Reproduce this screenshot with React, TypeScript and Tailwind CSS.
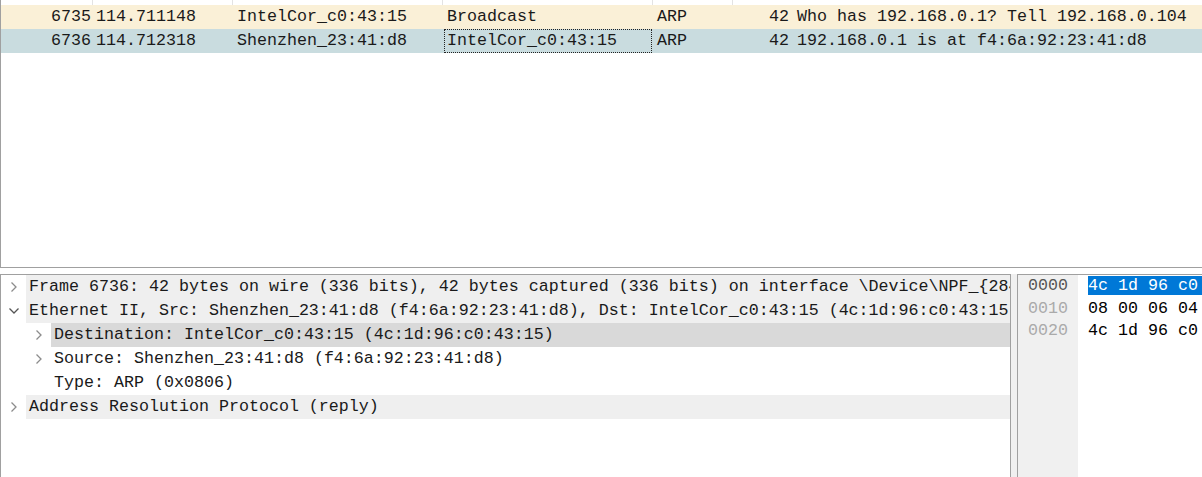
import type { ReactNode } from "react";

const mono = { fontFamily: '"Liberation Mono", "DejaVu Sans Mono", monospace' };

type Packet = {
  no: string;
  time: string;
  src: string;
  dst: string;
  proto: string;
  len: string;
  info: string;
  bg: string;
  focused?: boolean;
};

const packets: Packet[] = [
  {
    no: "6735",
    time: "114.711148",
    src: "IntelCor_c0:43:15",
    dst: "Broadcast",
    proto: "ARP",
    len: "42",
    info: "Who has 192.168.0.1? Tell 192.168.0.104",
    bg: "bg-[#faf0d7]",
  },
  {
    no: "6736",
    time: "114.712318",
    src: "Shenzhen_23:41:d8",
    dst: "IntelCor_c0:43:15",
    proto: "ARP",
    len: "42",
    info: "192.168.0.1 is at f4:6a:92:23:41:d8",
    bg: "bg-[#c9dcdf]",
    focused: true,
  },
];

function ChevronRight() {
  return (
    <svg width="8" height="12" viewBox="0 0 8 12" fill="none">
      <path d="M1.5 1.5 L6 6 L1.5 10.5" stroke="#8c8c8c" strokeWidth="1.3" />
    </svg>
  );
}

function ChevronDown() {
  return (
    <svg width="12" height="8" viewBox="0 0 12 8" fill="none">
      <path d="M1.5 1.5 L6 6 L10.5 1.5" stroke="#555" strokeWidth="1.3" />
    </svg>
  );
}

type TreeRowProps = {
  level: number;
  toggle?: "open" | "closed";
  bg?: string;
  children: ReactNode;
};

function TreeRow({ level, toggle, bg = "", children }: TreeRowProps) {
  return (
    <div className="flex h-6 items-stretch">
      {level > 0 ? <div className="w-[25px] shrink-0" /> : null}
      <div className="flex w-[25px] shrink-0 items-center justify-center">
        {toggle === "open" ? <ChevronDown /> : toggle === "closed" ? <ChevronRight /> : null}
      </div>
      <div className={`flex flex-1 items-center overflow-hidden whitespace-nowrap pl-[3px] ${bg}`}>
        {children}
      </div>
    </div>
  );
}

export default function App() {
  return (
    <div
      className="flex h-[477px] w-[1202px] flex-col overflow-hidden bg-white text-[16.66px] text-[#1a1a1a]"
      style={mono}
    >
      {/* packet list */}
      <div className="flex h-[268px] shrink-0 flex-col border-b border-l border-[#a0a0a0]">
        <div className="flex h-[5px]">
          <div className="w-[92px] border-r border-[#e3e3e3]" />
          <div className="w-[140px] border-r border-[#e3e3e3]" />
          <div className="w-[210px] border-r border-[#e3e3e3]" />
          <div className="w-[210px] border-r border-[#e3e3e3]" />
          <div className="w-[80px] border-r border-[#e3e3e3]" />
        </div>
        {packets.map((p) => (
          <div key={p.no} className={`flex h-6 items-center whitespace-nowrap ${p.bg}`}>
            <div className="w-[92px] pr-[2px] text-right">{p.no}</div>
            <div className="w-[140px] pl-[3px]">{p.time}</div>
            <div className="w-[210px] pl-[4px]">{p.src}</div>
            <div className="flex h-full w-[210px]">
              {p.focused ? (
                <div className="mx-[1px] flex flex-1 items-center border border-dotted border-[#222] pl-[2px]">
                  {p.dst}
                </div>
              ) : (
                <div className="flex items-center pl-[4px]">{p.dst}</div>
              )}
            </div>
            <div className="w-[80px] pl-[4px]">{p.proto}</div>
            <div className="w-[60px] pr-[4px] text-right">{p.len}</div>
            <div className="flex-1 pl-[4px]">{p.info}</div>
          </div>
        ))}
      </div>

      <div className="h-[6px] shrink-0" />

      {/* details + bytes */}
      <div className="flex flex-1">
        <div className="w-[1011px] shrink-0 overflow-hidden border-l border-r border-t border-[#a0a0a0]">
          <TreeRow level={0} toggle="closed" bg="bg-[#efefef]">
            {"Frame 6736: 42 bytes on wire (336 bits), 42 bytes captured (336 bits) on interface \\Device\\NPF_{2849A1C7-0F7B-4C5E-9D2B-6E3B1A0F7C11}, id 0"}
          </TreeRow>
          <TreeRow level={0} toggle="open" bg="bg-[#efefef]">
            Ethernet II, Src: Shenzhen_23:41:d8 (f4:6a:92:23:41:d8), Dst: IntelCor_c0:43:15 (4c:1d:96:c0:43:15)
          </TreeRow>
          <TreeRow level={1} toggle="closed" bg="bg-[#d9d9d9]">
            Destination: IntelCor_c0:43:15 (4c:1d:96:c0:43:15)
          </TreeRow>
          <TreeRow level={1} toggle="closed">
            Source: Shenzhen_23:41:d8 (f4:6a:92:23:41:d8)
          </TreeRow>
          <TreeRow level={1}>Type: ARP (0x0806)</TreeRow>
          <TreeRow level={0} toggle="closed" bg="bg-[#efefef]">
            Address Resolution Protocol (reply)
          </TreeRow>
        </div>

        <div className="w-[6px] shrink-0 bg-[#f0f0f0]" />

        <div className="flex flex-1 overflow-hidden border-l border-t border-[#a0a0a0]">
          <div className="w-[60px] shrink-0 bg-[#f0f0f0] pl-[10px] leading-[22.5px]">
            <div className="text-[#555]">0000</div>
            <div className="text-[#aaaaaa]">0010</div>
            <div className="text-[#aaaaaa]">0020</div>
          </div>
          <div className="flex-1 whitespace-nowrap pl-[10px] leading-[22.5px] text-black">
            <div>
              <span className="bg-[#0078d7] text-white">4c 1d 96 c0 43 15</span> f4 6a 92 23 41 d8 08 06 00 01
            </div>
            <div>08 00 06 04 00 02 f4 6a 92 23 41 d8 c0 a8 00 01</div>
            <div>4c 1d 96 c0 43 15 c0 a8 00 68</div>
          </div>
        </div>
      </div>
    </div>
  );
}
